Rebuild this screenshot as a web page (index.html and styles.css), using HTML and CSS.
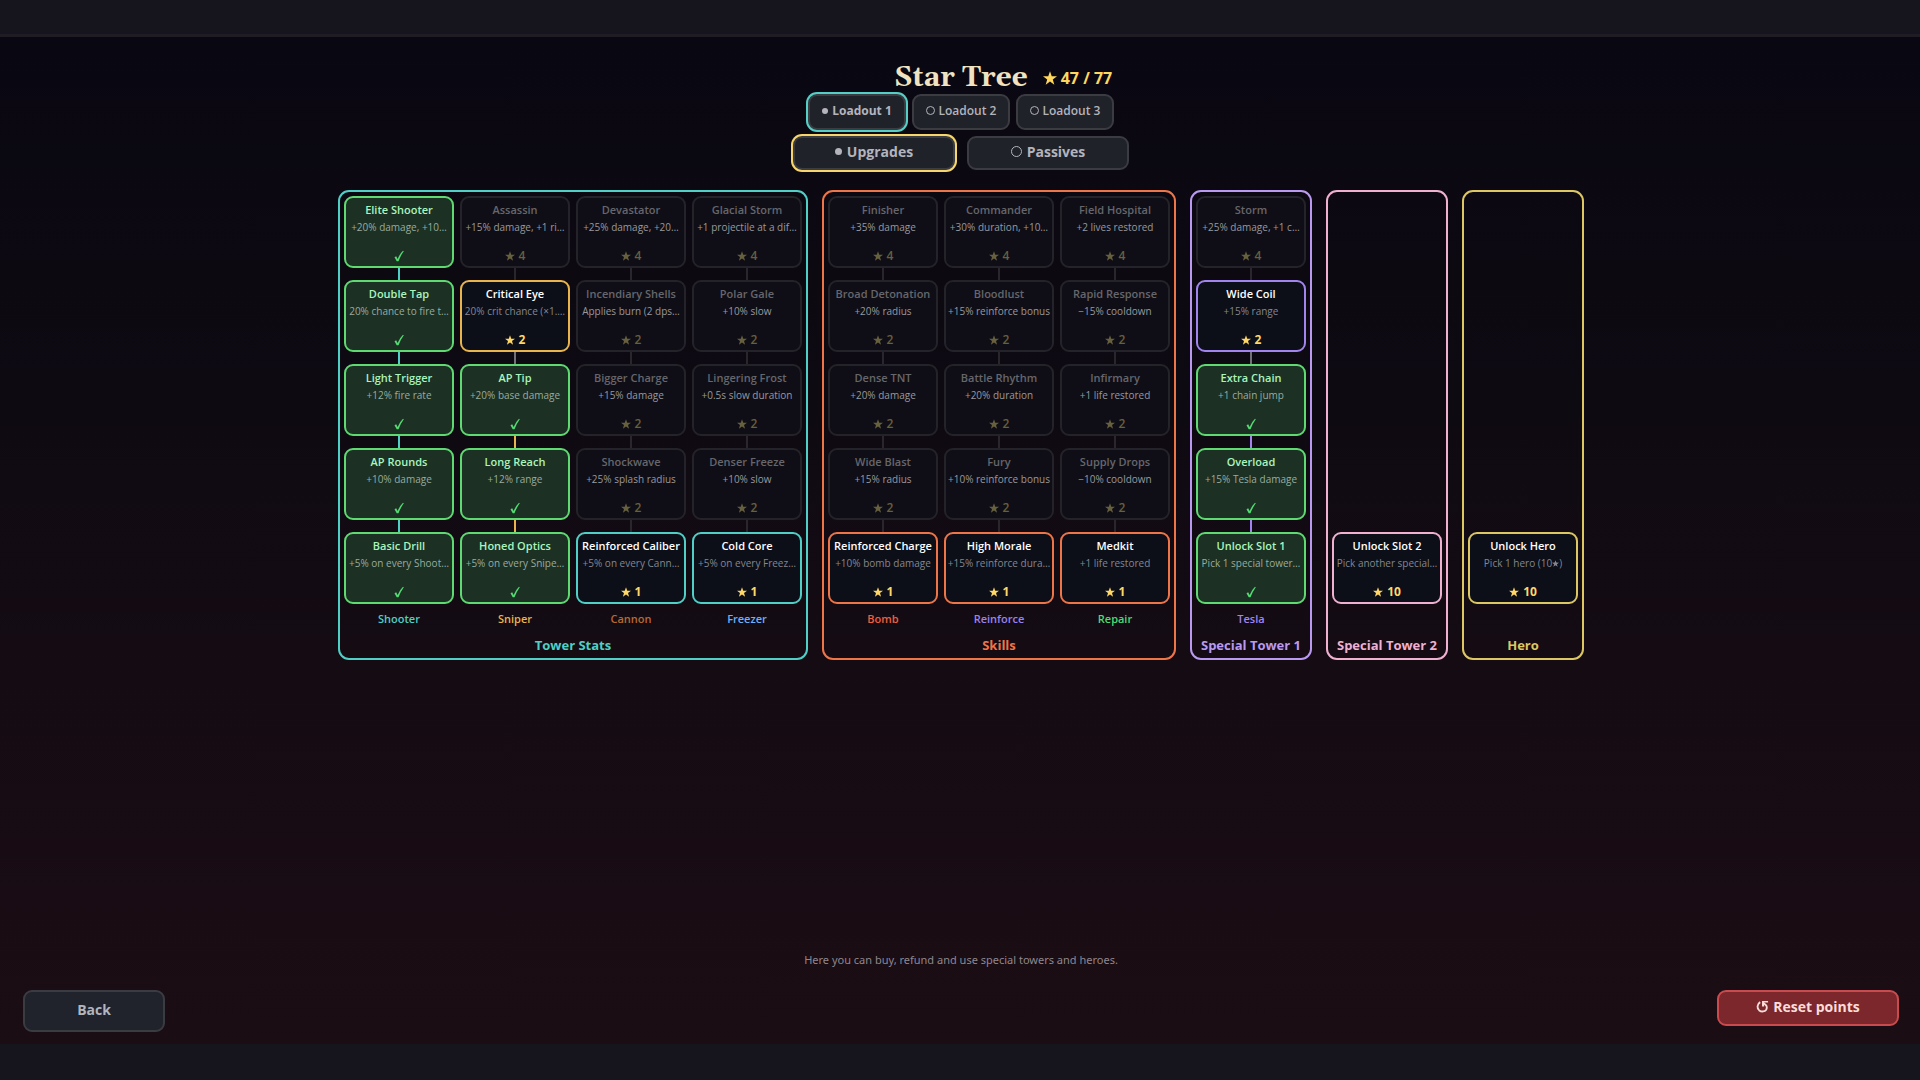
FILE: index.html
```html
<!DOCTYPE html>
<html lang="en">
<head>
<meta charset="utf-8">
<meta name="viewport" content="width=device-width, initial-scale=1">
<title>Star Tree</title>
<link rel="stylesheet" href="styles.css">
</head>
<body>
<svg class="defs" aria-hidden="true">
  <symbol id="check" viewBox="0 0 10 12"><path d="M0.5 7.2 L2.2 6.2 L3.6 9 Q5.6 4 9 0.8 L9.8 1.2 Q6.600 5.500 4.500 11.300 L2.700 11.300 Z"/></symbol>
  <symbol id="star" viewBox="0 0 12 12"><path d="M6 0.300 L7.500 4.400 L12 4.500 L8.400 7.300 L9.700 11.700 L6 9.100 L2.300 11.700 L3.600 7.300 L0 4.500 L4.500 4.400 Z"/></symbol>
</svg>
<div class="bar bar-top"></div>
<main class="screen">
  <header class="head">
    <h1 class="title">Star Tree</h1>
    <p class="points"><svg class="star star-lg"><use href="#star"/></svg>47 / 77</p>
  </header>
  <div class="loadouts">
    <button class="btn loadout is-on-cyan"><i class="dot"></i>Loadout 1</button>
    <button class="btn loadout"><i class="ring"></i>Loadout 2</button>
    <button class="btn loadout"><i class="ring"></i>Loadout 3</button>
  </div>
  <div class="tabs">
    <button class="btn tab is-on-gold"><i class="dot"></i>Upgrades</button>
    <button class="btn tab"><i class="ring"></i>Passives</button>
  </div>

  <div class="tree">
    <section class="panel cyan">
      <div class="tracks">
        <div class="track cyan">
          <ol class="nodes">
            <li><button class="node owned"><b>Elite Shooter</b><span>+20% damage, +10…</span><em><svg class="check"><use href="#check"/></svg></em></button></li>
            <li class="lit"><button class="node owned"><b>Double Tap</b><span>20% chance to fire t…</span><em><svg class="check"><use href="#check"/></svg></em></button></li>
            <li class="lit"><button class="node owned"><b>Light Trigger</b><span>+12% fire rate</span><em><svg class="check"><use href="#check"/></svg></em></button></li>
            <li class="lit"><button class="node owned"><b>AP Rounds</b><span>+10% damage</span><em><svg class="check"><use href="#check"/></svg></em></button></li>
            <li class="lit"><button class="node owned"><b>Basic Drill</b><span>+5% on every Shoot…</span><em><svg class="check"><use href="#check"/></svg></em></button></li>
          </ol>
          <h3 class="track-name">Shooter</h3>
        </div>
        <div class="track amber">
          <ol class="nodes">
            <li><button class="node locked"><b>Assassin</b><span>+15% damage, +1 ri…</span><em><svg class="star"><use href="#star"/></svg>4</em></button></li>
            <li><button class="node open"><b>Critical Eye</b><span>20% crit chance (×1.…</span><em><svg class="star"><use href="#star"/></svg>2</em></button></li>
            <li class="next"><button class="node owned"><b>AP Tip</b><span>+20% base damage</span><em><svg class="check"><use href="#check"/></svg></em></button></li>
            <li class="lit"><button class="node owned"><b>Long Reach</b><span>+12% range</span><em><svg class="check"><use href="#check"/></svg></em></button></li>
            <li class="lit"><button class="node owned"><b>Honed Optics</b><span>+5% on every Snipe…</span><em><svg class="check"><use href="#check"/></svg></em></button></li>
          </ol>
          <h3 class="track-name">Sniper</h3>
        </div>
        <div class="track cyan">
          <ol class="nodes">
            <li><button class="node locked"><b>Devastator</b><span>+25% damage, +20…</span><em><svg class="star"><use href="#star"/></svg>4</em></button></li>
            <li><button class="node locked"><b>Incendiary Shells</b><span>Applies burn (2 dps…</span><em><svg class="star"><use href="#star"/></svg>2</em></button></li>
            <li><button class="node locked"><b>Bigger Charge</b><span>+15% damage</span><em><svg class="star"><use href="#star"/></svg>2</em></button></li>
            <li><button class="node locked"><b>Shockwave</b><span>+25% splash radius</span><em><svg class="star"><use href="#star"/></svg>2</em></button></li>
            <li><button class="node open"><b>Reinforced Caliber</b><span>+5% on every Cann…</span><em><svg class="star"><use href="#star"/></svg>1</em></button></li>
          </ol>
          <h3 class="track-name name-cannon">Cannon</h3>
        </div>
        <div class="track cyan">
          <ol class="nodes">
            <li><button class="node locked"><b>Glacial Storm</b><span>+1 projectile at a dif…</span><em><svg class="star"><use href="#star"/></svg>4</em></button></li>
            <li><button class="node locked"><b>Polar Gale</b><span>+10% slow</span><em><svg class="star"><use href="#star"/></svg>2</em></button></li>
            <li><button class="node locked"><b>Lingering Frost</b><span>+0.5s slow duration</span><em><svg class="star"><use href="#star"/></svg>2</em></button></li>
            <li><button class="node locked"><b>Denser Freeze</b><span>+10% slow</span><em><svg class="star"><use href="#star"/></svg>2</em></button></li>
            <li><button class="node open"><b>Cold Core</b><span>+5% on every Freez…</span><em><svg class="star"><use href="#star"/></svg>1</em></button></li>
          </ol>
          <h3 class="track-name name-freezer">Freezer</h3>
        </div>
      </div>
      <h2 class="panel-name">Tower Stats</h2>
    </section>

    <section class="panel orange">
      <div class="tracks">
        <div class="track orange">
          <ol class="nodes">
            <li><button class="node locked"><b>Finisher</b><span>+35% damage</span><em><svg class="star"><use href="#star"/></svg>4</em></button></li>
            <li><button class="node locked"><b>Broad Detonation</b><span>+20% radius</span><em><svg class="star"><use href="#star"/></svg>2</em></button></li>
            <li><button class="node locked"><b>Dense TNT</b><span>+20% damage</span><em><svg class="star"><use href="#star"/></svg>2</em></button></li>
            <li><button class="node locked"><b>Wide Blast</b><span>+15% radius</span><em><svg class="star"><use href="#star"/></svg>2</em></button></li>
            <li><button class="node open"><b>Reinforced Charge</b><span>+10% bomb damage</span><em><svg class="star"><use href="#star"/></svg>1</em></button></li>
          </ol>
          <h3 class="track-name name-bomb">Bomb</h3>
        </div>
        <div class="track orange">
          <ol class="nodes">
            <li><button class="node locked"><b>Commander</b><span>+30% duration, +10…</span><em><svg class="star"><use href="#star"/></svg>4</em></button></li>
            <li><button class="node locked"><b>Bloodlust</b><span>+15% reinforce bonus</span><em><svg class="star"><use href="#star"/></svg>2</em></button></li>
            <li><button class="node locked"><b>Battle Rhythm</b><span>+20% duration</span><em><svg class="star"><use href="#star"/></svg>2</em></button></li>
            <li><button class="node locked"><b>Fury</b><span>+10% reinforce bonus</span><em><svg class="star"><use href="#star"/></svg>2</em></button></li>
            <li><button class="node open"><b>High Morale</b><span>+15% reinforce dura…</span><em><svg class="star"><use href="#star"/></svg>1</em></button></li>
          </ol>
          <h3 class="track-name name-reinforce">Reinforce</h3>
        </div>
        <div class="track orange">
          <ol class="nodes">
            <li><button class="node locked"><b>Field Hospital</b><span>+2 lives restored</span><em><svg class="star"><use href="#star"/></svg>4</em></button></li>
            <li><button class="node locked"><b>Rapid Response</b><span>−15% cooldown</span><em><svg class="star"><use href="#star"/></svg>2</em></button></li>
            <li><button class="node locked"><b>Infirmary</b><span>+1 life restored</span><em><svg class="star"><use href="#star"/></svg>2</em></button></li>
            <li><button class="node locked"><b>Supply Drops</b><span>−10% cooldown</span><em><svg class="star"><use href="#star"/></svg>2</em></button></li>
            <li><button class="node open"><b>Medkit</b><span>+1 life restored</span><em><svg class="star"><use href="#star"/></svg>1</em></button></li>
          </ol>
          <h3 class="track-name name-repair">Repair</h3>
        </div>
      </div>
      <h2 class="panel-name">Skills</h2>
    </section>

    <section class="panel lilac">
      <div class="tracks">
        <div class="track violet">
          <ol class="nodes">
            <li><button class="node locked"><b>Storm</b><span>+25% damage, +1 c…</span><em><svg class="star"><use href="#star"/></svg>4</em></button></li>
            <li><button class="node open"><b>Wide Coil</b><span>+15% range</span><em><svg class="star"><use href="#star"/></svg>2</em></button></li>
            <li class="next"><button class="node owned"><b>Extra Chain</b><span>+1 chain jump</span><em><svg class="check"><use href="#check"/></svg></em></button></li>
            <li class="lit"><button class="node owned"><b>Overload</b><span>+15% Tesla damage</span><em><svg class="check"><use href="#check"/></svg></em></button></li>
            <li class="lit"><button class="node owned"><b>Unlock Slot 1</b><span>Pick 1 special tower…</span><em><svg class="check"><use href="#check"/></svg></em></button></li>
          </ol>
          <h3 class="track-name">Tesla</h3>
        </div>
      </div>
      <h2 class="panel-name">Special Tower 1</h2>
    </section>

    <section class="panel pink">
      <div class="tracks">
        <div class="track pink">
          <ol class="nodes">
            <li><button class="node open"><b>Unlock Slot 2</b><span>Pick another special…</span><em><svg class="star"><use href="#star"/></svg>10</em></button></li>
          </ol>
          <div class="track-name"></div>
        </div>
      </div>
      <h2 class="panel-name">Special Tower 2</h2>
    </section>

    <section class="panel gold">
      <div class="tracks">
        <div class="track gold">
          <ol class="nodes">
            <li><button class="node open"><b>Unlock Hero</b><span>Pick 1 hero (10<svg class="star star-sm"><use href="#star"/></svg>)</span><em><svg class="star"><use href="#star"/></svg>10</em></button></li>
          </ol>
          <div class="track-name"></div>
        </div>
      </div>
      <h2 class="panel-name">Hero</h2>
    </section>
  </div>

  <p class="hint">Here you can buy, refund and use special towers and heroes.</p>
  <footer class="actions">
    <button class="btn back">Back</button>
    <button class="btn reset">
      <svg class="undo" viewBox="0 0 14 14"><path d="M4.500 2.300 C1 4.500 0.800 9 3.500 11.200 C6 13 9.500 12.600 11 10.400 C12.500 8 11.500 5 8.200 3.600" fill="none" stroke="currentColor" stroke-width="2"/><path d="M6.500 1 H13 V2.600 H8.800 V7 H6.500 Z" fill="currentColor"/></svg>Reset points
    </button>
  </footer>
</main>
<div class="bar"></div>
</body>
</html>
```

FILE: styles.css
```css
* { box-sizing: border-box; }

body {
  margin: 0;
  min-height: 100vh;
  display: flex;
  flex-direction: column;
  background: #16141d;
  color: #b4b4bc;
  font-family: "Open Sans", "Noto Sans", sans-serif;
}

h1, h2, h3, p, ol { margin: 0; padding: 0; }
ol { list-style: none; }
button { font-family: inherit; cursor: pointer; }
.defs { display: none; }

.bar { height: 36px; flex: none; }
.bar-top { height: 37px; border-bottom: 3px solid #1f1c23; }

.screen {
  flex: 1;
  display: flex;
  flex-direction: column;
  align-items: center;
  padding: 25px 21px 12px 23px;
  background: linear-gradient(#090711, #0e0a12 35%, #140b13 60%, #190c14 85%, #1a0d13);
}

/* Header */
.head {
  width: 100%;
  display: grid;
  grid-template-columns: 1fr auto 1fr;
  align-items: center;
  column-gap: 15px;
  height: 32px;
}
.title {
  grid-column: 2;
  color: #efe3c2;
  font: bold 28px/32px Gelasio, Georgia, "Liberation Serif", serif;
}
.points {
  display: flex;
  align-items: center;
  gap: 4px;
  color: #ffd75e;
  font-size: 16px;
  font-weight: 700;
  line-height: 20px;
}

.star { width: 10px; height: 10px; fill: currentColor; flex: none; }
.star-lg { width: 14px; height: 14px; }
.star-sm { width: 7px; height: 7px; }
.check { width: 10px; height: 12px; fill: currentColor; }

.btn {
  display: flex;
  align-items: center;
  justify-content: center;
  gap: 4px;
  padding: 0 0 3px;
  border: 2px solid #3b3b42;
  border-radius: 9px;
  background: #20222a;
  color: #b4b4bc;
  font-weight: 700;
  white-space: nowrap;
}
.loadouts { display: flex; gap: 6px; }
.loadout { width: 98px; height: 36px; font-size: 12px; font-weight: 600; }
.loadout.is-on-cyan { font-weight: 700; }
.tabs { display: flex; gap: 12px; margin-top: 6px; }
.tab { width: 162px; height: 34px; font-size: 14px; gap: 5px; }
.is-on-cyan { box-shadow: 0 0 0 2px #55cfc5; }
.is-on-gold { box-shadow: 0 0 0 2px #f6d66a; }

.dot { width: 6px; height: 6px; border-radius: 50%; background: currentColor; }
.ring { width: 9px; height: 9px; border: 1px solid currentColor; border-radius: 50%; }
.tab .dot { width: 7px; height: 7px; }
.tab .ring { width: 11px; height: 11px; }

/* Tree */
.cyan { --tone: #4fcfc5; }
.amber { --tone: #e9b44c; }
.orange { --tone: #ee7548; }
.lilac { --tone: #b99af0; }
.violet { --tone: #a184ee; }
.pink { --tone: #f0b0d0; }
.gold { --tone: #dcc763; }

.tree {
  display: flex;
  flex-wrap: wrap;
  justify-content: center;
  gap: 14px;
  margin-top: 20px;
}
.panel {
  display: flex;
  flex-direction: column;
  padding: 4px 4px 3px;
  border: 2px solid var(--tone);
  border-radius: 11px;
}
.tracks { flex: 1; display: flex; gap: 6px; }
.track { width: 110px; display: flex; flex-direction: column; justify-content: flex-end; }
.nodes li { display: flex; flex-direction: column; }
.nodes li + li::before {
  content: "";
  align-self: center;
  width: 2px;
  height: 12px;
  background: #29272d;
}
.nodes .next::before { background: #737078; }
.nodes .lit::before { background: var(--tone); }
.track-name {
  height: 16px;
  margin-top: 7px;
  color: var(--tone);
  font-size: 11px;
  line-height: 16px;
  font-weight: 600;
  text-align: center;
}
.name-cannon { color: #b8692f; }
.name-freezer { color: #6fb0f5; }
.name-bomb { color: #ee5f3c; }
.name-reinforce { color: #9a82ee; }
.name-repair { color: #4bdb74; }
.panel-name {
  margin-top: 8px;
  color: var(--tone);
  font-size: 13px;
  line-height: 20px;
  font-weight: 700;
  text-align: center;
  white-space: nowrap;
}

.node {
  display: flex;
  flex-direction: column;
  align-items: center;
  height: 72px;
  padding: 4px 0 1px;
  border: 2px solid var(--tone);
  border-radius: 9px;
  background: #0c0e18;
  color: #fff;
  white-space: nowrap;
}
.node b { font-size: 11px; line-height: 16px; font-weight: 600; }
.node span {
  display: flex;
  align-items: center;
  color: #85868e;
  font-size: 10px;
  line-height: 18px;
}
.node em {
  display: flex;
  align-items: center;
  gap: 4px;
  margin-top: auto;
  color: #ffd767;
  font-size: 12px;
  font-style: normal;
  font-weight: 700;
  line-height: 18px;
  height: 18px;
}
.node.owned { border-color: #5fd971; background: #1c3024; color: #a9f5bd; }
.node.owned span { color: #98ac9f; }
.node.owned em { color: #55d972; }
.node.locked { border-color: #242329; background: #0f0e16; color: #66666c; }
.node.locked span { color: #98989e; }
.node.locked em { color: #66603f; font-weight: 600; }

/* Bottom */
.hint {
  margin-top: auto;
  color: #8f878f;
  font-family: "Noto Sans", "Open Sans", sans-serif;
  font-size: 11px;
  line-height: 20px;
}
.actions {
  width: 100%;
  display: flex;
  justify-content: space-between;
  align-items: flex-start;
  margin-top: 20px;
}
.back { width: 142px; height: 42px; font-size: 14px; background: #20232b; }
.reset {
  width: 182px;
  height: 36px;
  border-color: #c94b4e;
  background: #7b272c;
  color: #fbdcda;
  font-size: 14px;
}
.undo { width: 13px; height: 13px; }
```
